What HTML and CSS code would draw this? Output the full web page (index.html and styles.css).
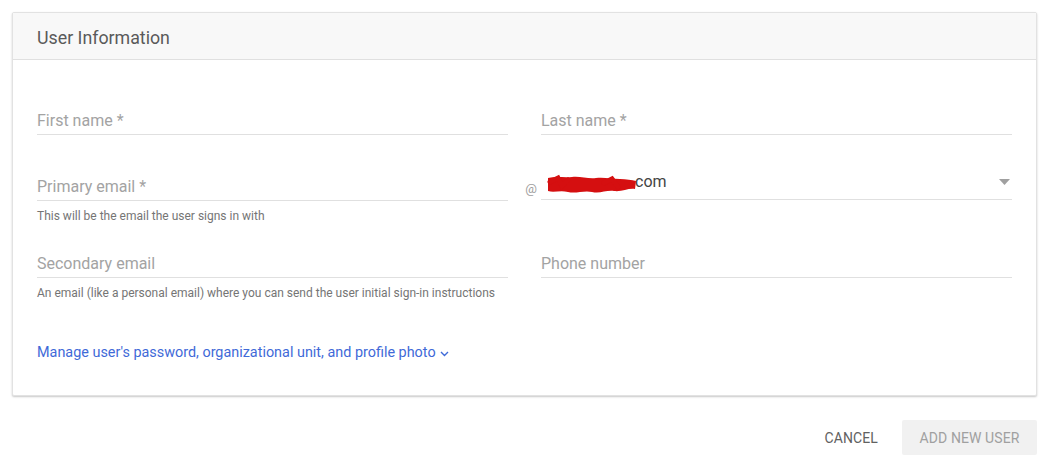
FILE: index.html
```html
<!DOCTYPE html>
<html>
<head>
<meta charset="utf-8">
<link rel="stylesheet" href="styles.css">
</head>
<body>
<div class="page">
  <section class="card">
    <div class="card-header">User Information</div>
    <div class="card-body">
      <div class="grid row1">
        <div class="cell">
          <div class="field"><span class="placeholder">First name *</span></div>
        </div>
        <div class="sep"></div>
        <div class="cell">
          <div class="field"><span class="placeholder">Last name *</span></div>
        </div>
      </div>
      <div class="grid row2">
        <div class="cell">
          <div class="field"><span class="placeholder">Primary email *</span></div>
          <div class="hint">This will be the email the user signs in with</div>
        </div>
        <div class="sep at">@</div>
        <div class="cell">
          <div class="field domain">
            <span class="domain-value"><svg class="redact" width="92" height="22" viewBox="0 0 92 22"><path d="M2 4 C10 2 18 4 26 3 C34 2 42 5 50 4 C58 3 66 5 74 5 C80 5 86 6 90 7 L89 15 C82 14 76 18 68 17 C60 16 54 20 46 18 C38 16 30 20 22 18 C14 16 8 19 2 17 Z" fill="#d50f10"/><path d="M4 8 L12 4 L16 12 L22 6 M58 9 L66 5 L72 13" stroke="#d50f10" stroke-width="5" stroke-linecap="round" fill="none"/></svg><span class="com">com</span></span>
            <svg class="caret" width="11" height="6" viewBox="0 0 11 6"><path d="M0 0 L11 0 L5.5 6 Z" fill="#a0a0a0"/></svg>
          </div>
        </div>
      </div>
      <div class="grid row3">
        <div class="cell">
          <div class="field"><span class="placeholder">Secondary email</span></div>
          <div class="hint">An email (like a personal email) where you can send the user initial sign-in instructions</div>
        </div>
        <div class="sep"></div>
        <div class="cell">
          <div class="field"><span class="placeholder">Phone number</span></div>
        </div>
      </div>
      <a class="manage" href="#">Manage user's password, organizational unit, and profile photo<svg class="chev" width="9" height="6" viewBox="0 0 9 6"><path d="M1 1 L4.5 4.5 L8 1" fill="none" stroke="#3f6ad8" stroke-width="1.4"/></svg></a>
    </div>
  </section>
  <div class="actions">
    <button class="btn cancel">CANCEL</button>
    <button class="btn add">ADD NEW USER</button>
  </div>
</div>
</body>
</html>
```
FILE: styles.css
```css
html, body {
  margin: 0;
  padding: 0;
  background: #ffffff;
  font-family: Roboto, "Liberation Sans", Arial, sans-serif;
}

.page {
  padding: 12px 22px 0 12px;
}

.card {
  width: 1025px;
  box-sizing: border-box;
  border: 1px solid #e2e2e2;
  border-radius: 2px;
  box-shadow: 0 1px 2px rgba(0, 0, 0, 0.22);
  background: #fff;
}

.card-header {
  height: 47px;
  box-sizing: border-box;
  padding: 14px 24px 0;
  background: #f8f8f8;
  border-bottom: 1px solid #e0e0e0;
  font-size: 17.8px;
  line-height: 22px;
  color: #5a5a5a;
}

.card-body {
  padding: 51px 24px 32px;
}

.grid {
  display: grid;
  grid-template-columns: 471px 33px 471px;
}

.row1 {
  margin-bottom: 42px;
}

.row2 {
  margin-bottom: 30px;
}

.row3 {
  margin-bottom: 41px;
}

.field {
  height: 23px;
  border-bottom: 1px solid #e0e0e0;
  font-size: 16px;
  line-height: 20px;
  color: #9e9e9e;
  display: flex;
  align-items: flex-start;
}

.placeholder {
  color: #a3a3a3;
}

.hint {
  margin-top: 7px;
  font-size: 12px;
  line-height: 16px;
  color: #757575;
}

.sep.at {
  font-size: 13px;
  color: #9e9e9e;
  line-height: 16px;
  display: flex;
  justify-content: flex-end;
  align-items: flex-start;
  padding: 4px 4px 0 0;
}

.field.domain {
  height: 22px;
  justify-content: space-between;
  margin-top: -4px;
  padding-top: 4px;
}

.domain-value {
  display: flex;
  align-items: center;
  margin-top: -6px;
}

.redact {
  margin-left: 5px;
  margin-right: -3px;
  position: relative;
  top: 3px;
}

.com {
  color: #444444;
  font-size: 16px;
}

.caret {
  margin: 2px 2px 0 0;
}

.manage {
  display: inline-flex;
  align-items: center;
  font-size: 14.4px;
  line-height: 20px;
  color: #3f6ad8;
  text-decoration: none;
}

.chev {
  margin-left: 4px;
  margin-top: 2px;
}

.actions {
  width: 1025px;
  display: flex;
  justify-content: flex-end;
  align-items: center;
  gap: 24px;
  margin-top: 24px;
}

.btn {
  font-family: Roboto, "Liberation Sans", Arial, sans-serif;
  font-size: 14px;
  border: none;
  border-radius: 2px;
  height: 35px;
  padding: 0;
  background: transparent;
  white-space: nowrap;
  letter-spacing: 0.1px;
}

.cancel {
  color: #616161;
}

.add {
  background: #f1f1f1;
  color: #a0a0a0;
  width: 135px;
  text-align: center;
}
```
